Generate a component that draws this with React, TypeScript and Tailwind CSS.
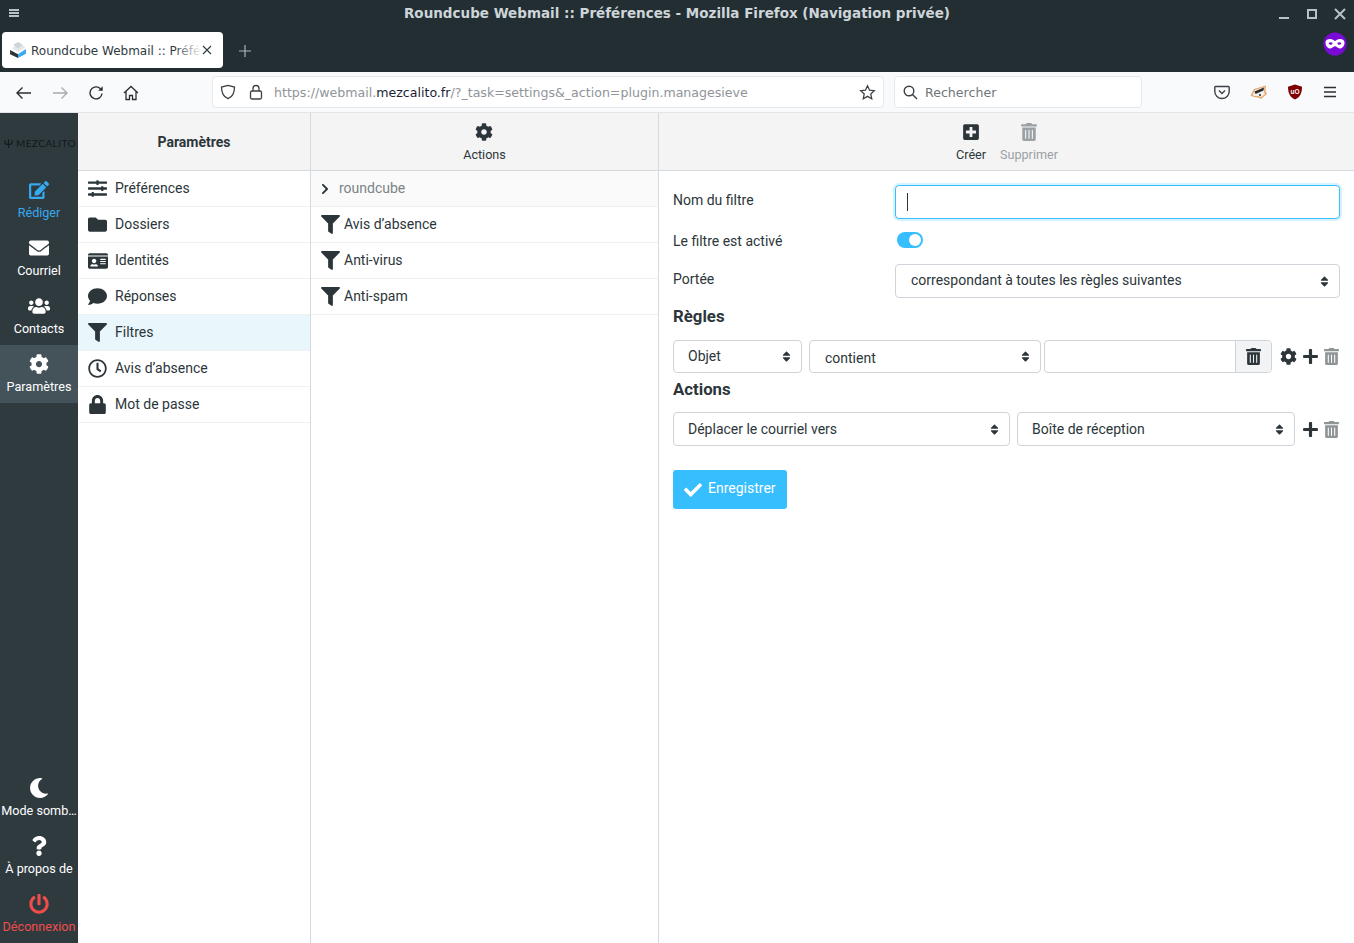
import React from "react";
import {
  FaEdit, FaEnvelope, FaUsers, FaCog, FaMoon, FaQuestion, FaPowerOff, FaSlidersH, FaFolder, FaIdCard,
  FaComment, FaFilter, FaRegClock, FaLock, FaChevronRight, FaPlusSquare, FaTrashAlt, FaCheck, FaPlus, FaSort,
} from "react-icons/fa";

function NavItem({ icon, label, color = "text-white", active = false }: { icon: React.ReactNode; label: string; color?: string; active?: boolean }) {
  return (
    <div className={`h-[58px] flex flex-col items-center pt-[8px] ${color} ${active ? "bg-[#44535a]" : ""}`}>
      <div className="h-[21px] flex items-center justify-center text-[20px]">{icon}</div>
      <div className="w-full mt-[3px] text-center text-[12.6px] leading-[20px] whitespace-nowrap overflow-hidden">{label}</div>
    </div>
  );
}

function Row({ icon, label, active = false }: { icon: React.ReactNode; label: string; active?: boolean }) {
  return (
    <div className={`h-[36px] flex items-center border-b border-[#eef1f2] ${active ? "bg-[#e9f6fc]" : ""}`}>
      <div className="w-[37px] pl-[10px] shrink-0 flex items-center text-[#2c363a] text-[19px]">{icon}</div>
      <span className="text-[14px] text-[#2c363a]">{label}</span>
    </div>
  );
}

function FilterRow({ label }: { label: string }) {
  return (
    <div className="h-[36px] flex items-center border-b border-[#eef1f2]">
      <div className="w-[33px] pl-[10px] shrink-0 text-[#2c363a] text-[19px]"><FaFilter /></div>
      <span className="text-[14px] text-[#2c363a]">{label}</span>
    </div>
  );
}

function Select({ label, className = "", textClass = "" }: { label: string; className?: string; textClass?: string }) {
  return (
    <div className={`flex items-center justify-between shrink-0 rounded-[4px] border border-[#ced4da] bg-white pr-[8px] text-[14px] text-[#2c363a] ${className}`}>
      <span className={textClass}>{label}</span>
      <FaSort className="text-[13px] text-[#2c363a]" />
    </div>
  );
}

function ToolButton({ icon, label, muted = false }: { icon: React.ReactNode; label: string; muted?: boolean }) {
  return (
    <div className={`flex flex-col items-center ${muted ? "text-[#9aa1a5]" : "text-[#2c363a]"}`}>
      <div className="h-[21px] flex items-center text-[18px]">{icon}</div>
      <div className="mt-[4px] text-[12.6px] leading-[18px]">{label}</div>
    </div>
  );
}

export default function App() {
  return (
    <div className="h-[943px] w-[1354px] overflow-hidden flex flex-col font-['Roboto',sans-serif] bg-white">
      {/* Title bar */}
      <div className="h-[26px] bg-[#232e33] flex items-center justify-between text-[#c6ced2] relative shrink-0">
        <svg width="12" height="12" viewBox="0 0 12 12" className="ml-[8px]"><path d="M1 2h10v2H1zM1 5h10v2H1zM1 8h10v2H1z" fill="#b8c1c5" /></svg>
        <div className="absolute inset-x-0 text-center font-['DejaVu_Sans',sans-serif] font-bold text-[13.5px] leading-[26px] text-[#cdd5d9]">
          Roundcube Webmail :: Préférences - Mozilla Firefox (Navigation privée)
        </div>
        <svg width="70" height="14" viewBox="0 0 70 14" className="mr-[6px]" fill="none" stroke="#b8c1c5" strokeWidth="2">
          <path d="M1 12h10" />
          <rect x="30" y="4" width="8" height="8" />
          <path d="M57 3l10 10M67 3L57 13" />
        </svg>
      </div>
      {/* Tab bar */}
      <div className="h-[46px] bg-[#232e33] flex items-start shrink-0 pt-[6px] pl-[2px] relative">
        <div className="w-[221px] h-[36px] rounded-[4px] bg-white flex items-center pl-[7px] relative overflow-hidden">
          <svg width="18" height="18" viewBox="0 0 17 17">
            <path d="M8.5 1.5L15.5 6 8.5 10.5 3 7z" fill="#e4e7e8" />
            <path d="M1 8.500L8.500 12.500 8.500 16 1 12.500z" fill="#2c363a" />
            <path d="M16 7.500L8.500 12.500 8.500 16 16 12z" fill="#37a9f0" />
            <path d="M4 3.500L8.500 1 13 3.500 8.500 7z" fill="#cfd4d6" />
          </svg>
          <span className="ml-[4px] pt-[1px] font-['DejaVu_Sans',sans-serif] text-[12px] text-[#2f3a3f] whitespace-nowrap">Roundcube Webmail :: Préfé</span>
          <div className="absolute right-[21px] top-0 h-full w-[28px] bg-gradient-to-r from-white/0 to-white" />
          <svg width="10" height="10" viewBox="0 0 10 10" className="absolute right-[11px] top-[13px]" stroke="#2f3a3f" strokeWidth="1.1"><path d="M1 1l8 8M9 1l-8 8" /></svg>
        </div>
        <svg width="12" height="12" viewBox="0 0 12 12" className="ml-[16px] mt-[13px]" stroke="#aab3b7" strokeWidth="1.2"><path d="M6 0v12M0 6h12" /></svg>
        <svg width="24" height="24" viewBox="0 0 24 24" className="absolute right-[7px] top-[6px]">
          <circle cx="12" cy="12" r="11.5" fill="#7a0bd6" />
          <path d="M2.500 10.500c0-2.500 2.500-3.500 4.500-3.500 2.500 0 3.700 1.500 5 2 1.300-.5 2.500-2 5-2 2 0 4.500 1 4.500 3.500 0 3.500-2.300 6-4.700 6-2.100 0-3.500-2.200-4.800-2.200S9.300 16.500 7.200 16.500C4.800 16.500 2.500 14 2.500 10.500z" fill="#fff" />
          <ellipse cx="7.700" cy="11.500" rx="1.800" ry="1.200" fill="#7a0bd6" /><ellipse cx="16.300" cy="11.500" rx="1.800" ry="1.200" fill="#7a0bd6" />
        </svg>
      </div>
      {/* Nav toolbar */}
      <div className="h-[41px] bg-[#f9fafb] border-b border-[#e3e5e7] flex items-center shrink-0 relative">
        <div className="w-[212px] flex items-center shrink-0 text-[#2b2f33] pt-[1px]">
          <svg width="18" height="14" viewBox="0 0 18 14" className="ml-[15px]" fill="none" stroke="currentColor" strokeWidth="1.400"><path d="M2 7h14M7.500 1.500L2 7l5.500 5.500" /></svg>
          <svg width="18" height="14" viewBox="0 0 18 14" className="ml-[18px]" fill="none" stroke="#a8acb0" strokeWidth="1.400"><path d="M16 7H2M10.500 1.500L16 7l-5.500 5.500" /></svg>
          <svg width="16" height="16" viewBox="0 0 16 16" className="ml-[19px]" fill="none" stroke="currentColor" strokeWidth="1.400"><path d="M14 8.500A6 6 0 1 1 11.500 3L14 5" /><path d="M14.700 1.200v4.500h-4.500z" fill="currentColor" stroke="none" /></svg>
          <svg width="16" height="16" viewBox="0 0 16 16" className="ml-[19px]" fill="none" stroke="currentColor" strokeWidth="1.300"><path d="M1 8l7-6.500L15 8M3 6.500V14.500h3.500v-4h3v4H13V6.500" /></svg>
        </div>
        <div className="w-[672px] h-[32px] rounded-[4px] border border-[#e6e8ea] bg-white flex items-center shrink-0 text-[12.6px] font-['DejaVu_Sans',sans-serif]">
          <svg width="16" height="16" viewBox="0 0 16 16" className="ml-[7px] shrink-0" fill="none" stroke="#3b4146" strokeWidth="1.300"><path d="M8 1.300L14.500 3c0 6-1.800 9.800-6.500 11.700C3.300 12.800 1.500 9 1.500 3z" /></svg>
          <svg width="14" height="16" viewBox="0 0 14 16" className="ml-[13px] shrink-0" fill="none" stroke="#3b4146" strokeWidth="1.300"><rect x="1.500" y="7" width="11" height="8" rx="1.500" /><path d="M4 7V4.500a3 3 0 0 1 6 0V7" /></svg>
          <span className="ml-[11px] pt-[2px] text-[#8f9499] whitespace-nowrap">https://webmail.<span className="text-[#1a1f36]">mezcalito.fr</span>/?_task=settings&amp;_action=plugin.managesieve</span>
          <svg width="17" height="17" viewBox="0 0 24 24" className="ml-auto mr-[7px]" fill="none" stroke="#3b4146" strokeWidth="1.800"><path d="M12 2.500l2.900 6.200 6.700.8-5 4.600 1.400 6.700L12 17.400l-6 3.400 1.400-6.700-5-4.600 6.700-.8z" /></svg>
        </div>
        <div className="ml-[10px] w-[248px] h-[32px] rounded-[4px] border border-[#e6e8ea] bg-white flex items-center shrink-0 text-[12.6px] font-['DejaVu_Sans',sans-serif] text-[#70757a]">
          <svg width="15" height="15" viewBox="0 0 15 15" className="ml-[8px]" fill="none" stroke="#3b4146" strokeWidth="1.400"><circle cx="6" cy="6" r="4.800" /><path d="M9.500 9.500l4.500 4.500" /></svg>
          <span className="ml-[7px] pt-[2px]">Rechercher</span>
        </div>
        <div className="ml-auto flex items-center mr-[17px] gap-[20px]">
          <svg width="16" height="16" viewBox="0 0 16 16" fill="none" stroke="#3b4146" strokeWidth="1.400"><path d="M1.500 2.500h13c.5 0 .7.300.7.800v4.200a7.200 7 0 0 1-14.400 0V3.300c0-.5.200-.8.700-.8z" /><path d="M5 6.500l3 3 3-3" /></svg>
          <svg width="18" height="16" viewBox="0 0 18 16">
            <path d="M0.500 11.500L4 5 16 1.500 15.500 7 17 10 11 15 8 13.500 4 13z" fill="#e9a66c" />
            <path d="M2.500 11L5 6l9.500-3-.5 4.500 1 2.500-4 3.300-3-1.300-3.500 0z" fill="#f1f0ea" />
            <path d="M4.500 7.500L14 3.500l-.5 3L5.500 10z" fill="#2a2a2a" />
            <circle cx="10" cy="11" r="1" fill="#2a2a2a" />
          </svg>
          <svg width="16" height="16" viewBox="0 0 16 16" className="-ml-[1px]"><path d="M8 0.500L15 2.800c0 6.500-2 10.500-7 12.700C3 13.300 1 9.300 1 2.800z" fill="#800000" /><text x="8" y="9.500" textAnchor="middle" fontSize="6.500" fontWeight="700" fill="#fff" fontFamily="Liberation Sans, sans-serif">uO</text></svg>
          <svg width="14" height="12" viewBox="0 0 14 12" stroke="#2b2f33" strokeWidth="1.300"><path d="M1 1.500h12M1 6h12M1 10.500h12" /></svg>
        </div>
      </div>
      {/* App */}
      <div className="flex-1 flex min-h-0">
        {/* Sidebar */}
        <div className="w-[78px] shrink-0 bg-[#2f3a3f] flex flex-col">
          <div className="h-[58px] flex items-center pl-[4px] pt-[2px] text-[#12181b] whitespace-nowrap overflow-hidden">
            <svg width="9" height="11" viewBox="0 0 9 11" fill="none" stroke="currentColor" strokeWidth="1.100"><path d="M4.500 1v9M1 2v2.500c0 1 1 2 3.500 2S8 5.500 8 4.500V2" /></svg>
            <span className="ml-[3px] text-[10px] tracking-[0.45px] font-['Lato',sans-serif]">MEZCALITO</span>
          </div>
          <NavItem icon={<FaEdit />} label="Rédiger" color="text-[#37a9f0]" />
          <NavItem icon={<FaEnvelope />} label="Courriel" />
          <NavItem icon={<FaUsers className="text-[22px]" />} label="Contacts" />
          <NavItem icon={<FaCog />} label="Paramètres" active />
          <div className="mt-auto">
            <NavItem icon={<FaMoon />} label="Mode somb…" />
            <NavItem icon={<FaQuestion />} label="À propos de" />
            <NavItem icon={<FaPowerOff />} label="Déconnexion" color="text-[#ef4c4c]" />
          </div>
        </div>
        {/* Settings column */}
        <div className="w-[233px] shrink-0 border-r border-[#d4dbde] flex flex-col">
          <div className="h-[58px] bg-[#f4f4f4] border-b border-[#d4dbde] flex items-center justify-center pt-[2px] text-[14px] font-bold text-[#2c363a]">Paramètres</div>
          <Row icon={<FaSlidersH />} label="Préférences" />
          <Row icon={<FaFolder />} label="Dossiers" />
          <Row icon={<FaIdCard className="text-[20px]" />} label="Identités" />
          <Row icon={<FaComment />} label="Réponses" />
          <Row icon={<FaFilter />} label="Filtres" active />
          <Row icon={<FaRegClock />} label="Avis d’absence" />
          <Row icon={<FaLock />} label="Mot de passe" />
        </div>
        {/* Filters column */}
        <div className="w-[348px] shrink-0 border-r border-[#d4dbde] flex flex-col">
          <div className="h-[58px] bg-[#f4f4f4] border-b border-[#d4dbde] flex items-start justify-center pt-[8px]">
            <ToolButton icon={<FaCog />} label="Actions" />
          </div>
          <div className="h-[36px] bg-[#fafafa] flex items-center border-b border-[#eef1f2]">
            <FaChevronRight className="ml-[8px] text-[12px] text-[#2c363a]" />
            <span className="ml-[8px] text-[14px] text-[#7a8387]">roundcube</span>
          </div>
          <FilterRow label="Avis d’absence" />
          <FilterRow label="Anti-virus" />
          <FilterRow label="Anti-spam" />
        </div>
        {/* Form */}
        <div className="flex-1 flex flex-col min-w-0">
          <div className="h-[58px] bg-[#f4f4f4] border-b border-[#d4dbde] flex items-start justify-center pt-[8px] pl-[1px] gap-[14px]">
            <ToolButton icon={<FaPlusSquare />} label="Créer" />
            <ToolButton icon={<FaTrashAlt />} label="Supprimer" muted />
          </div>
          <div className="pl-[14px] pr-[14px] pt-[14px] text-[14px] text-[#2c363a]">
            <div className="flex items-start h-[34px]">
              <div className="w-[222px] shrink-0 pt-[5px] leading-[20px]">Nom du filtre</div>
              <div className="flex-1 h-[34px] rounded-[4px] border border-[#37beff] shadow-[0_0_0_2px_rgba(55,190,255,0.2)] bg-white flex items-center pl-[11px]">
                <div className="w-px h-[18px] bg-[#2c363a]" />
              </div>
            </div>
            <div className="flex items-center h-[45px]">
              <div className="w-[222px] shrink-0">Le filtre est activé</div>
              <div className="ml-[2px] mb-[3px] w-[26px] h-[16px] rounded-full bg-[#37beff] flex items-center justify-end pr-[2px]">
                <div className="w-[12px] h-[12px] rounded-full bg-white" />
              </div>
            </div>
            <div className="flex items-start h-[34px]">
              <div className="w-[222px] shrink-0 pt-[5px] leading-[20px]">Portée</div>
              <Select label="correspondant à toutes les règles suivantes" className="flex-1 h-[34px] pl-[15px]" textClass="pb-[2px]" />
            </div>
            <div className="mt-[6px] text-[16.8px] font-bold leading-[24px]">Règles</div>
            <div className="mt-[11px] flex items-center h-[34px]">
              <Select label="Objet" className="w-[129px] h-[33px] pl-[14px]" />
              <Select label="contient" className="ml-[7px] w-[232px] h-[33px] pl-[15px]" textClass="pt-[5px]" />
              <div className="ml-[3px] w-[228px] h-[33px] rounded-[4px] border border-[#ced4da] flex overflow-hidden">
                <div className="flex-1" />
                <div className="w-[36px] bg-[#f1f3f4] border-l border-[#ced4da] flex items-center justify-center text-[17px]"><FaTrashAlt /></div>
              </div>
              <FaCog className="ml-[8px] text-[17px] text-[#2c363a]" />
              <FaPlus className="ml-[5px] text-[17px] text-[#2c363a]" />
              <FaTrashAlt className="ml-[4px] text-[17px] text-[#8f9496]" />
            </div>
            <div className="mt-[4px] text-[16.8px] font-bold leading-[24px]">Actions</div>
            <div className="mt-[11px] flex items-center h-[34px]">
              <Select label="Déplacer le courriel vers" className="w-[337px] h-[34px] pl-[14px]" />
              <Select label="Boîte de réception" className="ml-[7px] w-[278px] h-[34px] pl-[14px]" />
              <FaPlus className="ml-[7px] text-[17px] text-[#2c363a]" />
              <FaTrashAlt className="ml-[4px] text-[17px] text-[#8f9496]" />
            </div>
            <div className="mt-[24px] w-[114px] h-[39px] rounded-[3px] bg-[#37beff] flex items-center pl-[11px] text-white">
              <FaCheck className="text-[18px] mr-[6px]" />
              <span className="pb-[2px]">Enregistrer</span>
            </div>
          </div>
        </div>
      </div>
    </div>
  );
}
